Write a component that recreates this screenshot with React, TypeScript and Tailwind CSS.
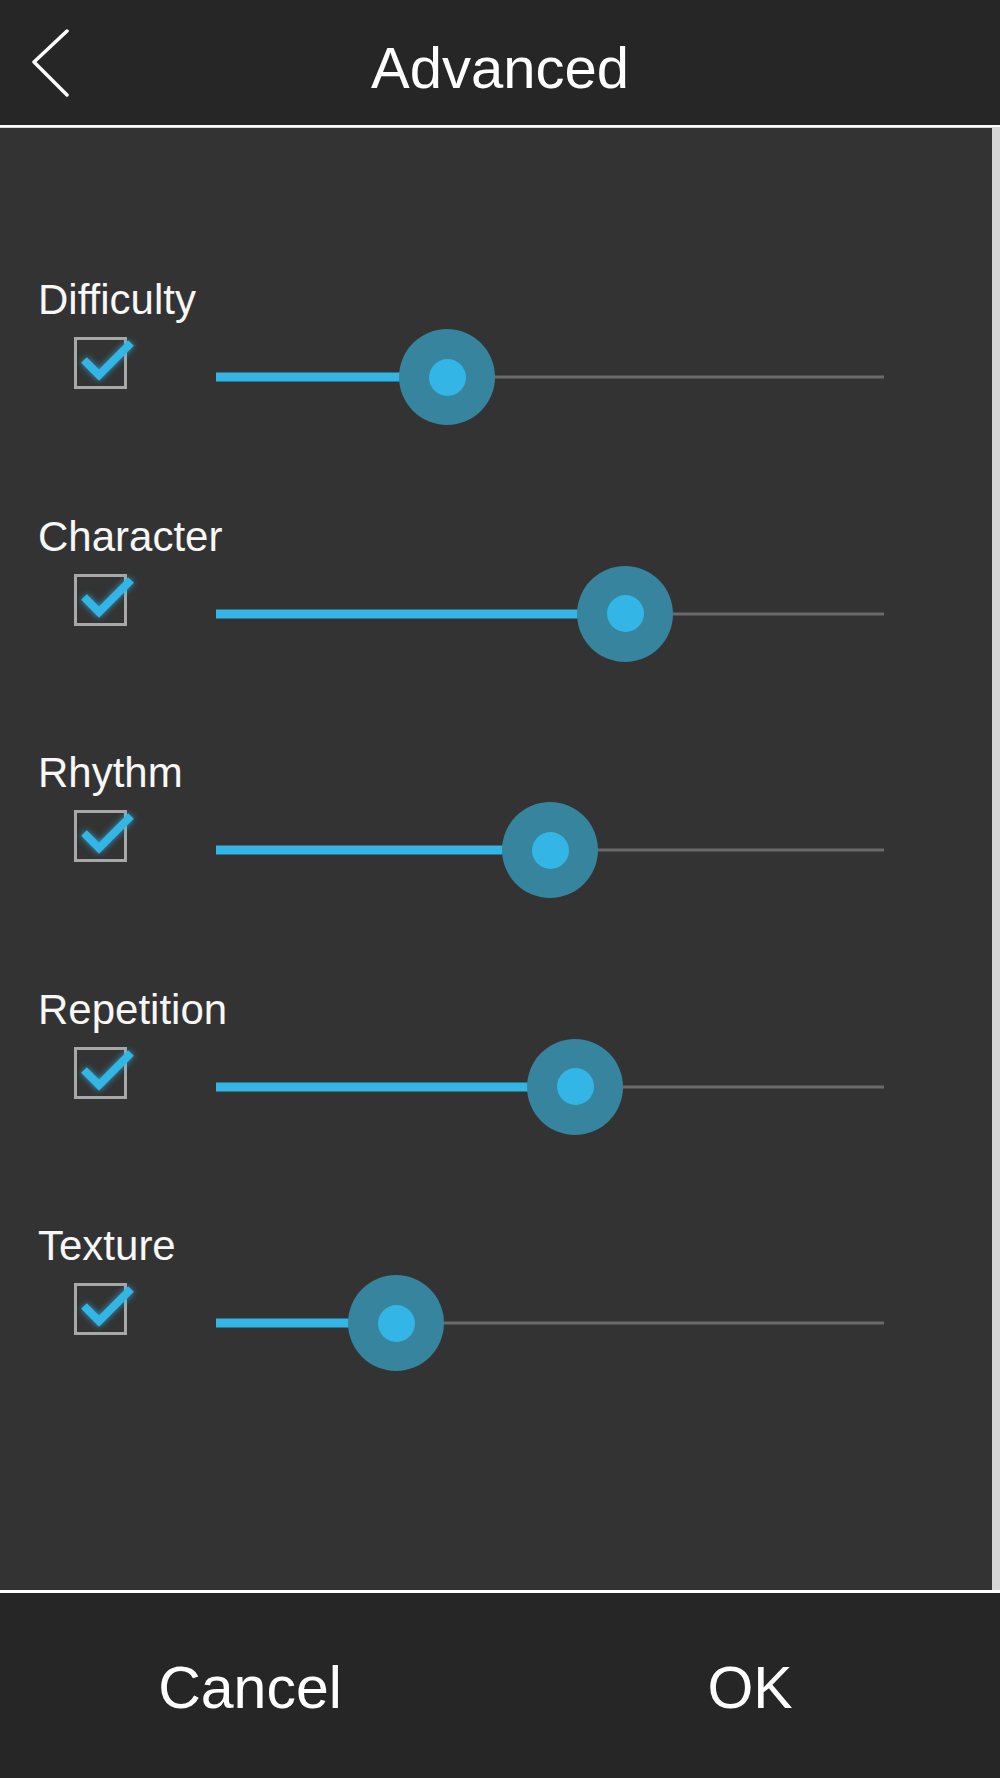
import React from 'react';

const settings = [
  { label: 'Difficulty', value: 231 },
  { label: 'Character', value: 409 },
  { label: 'Rhythm', value: 334 },
  { label: 'Repetition', value: 359 },
  { label: 'Texture', value: 180 },
];

function CheckBox() {
  return (
    <div className="relative mt-[13px] h-[52px] w-[53px] shrink-0 border-[3px] border-[#a8a8a8]">
      <svg
        className="absolute left-[-3px] top-[-3px] overflow-visible"
        width="53"
        height="52"
        viewBox="0 0 53 52"
        style={{ filter: 'drop-shadow(0 0 3px rgba(51,181,229,0.8))' }}
      >
        <polyline
          points="10,23 25,38 57,6"
          fill="none"
          stroke="#33b5e5"
          strokeWidth="8"
          strokeLinecap="butt"
          strokeLinejoin="miter"
        />
      </svg>
    </div>
  );
}

function Slider({ value }: { value: number }) {
  return (
    <div className="relative h-full w-[668px]">
      <div className="absolute left-0 right-0 top-1/2 h-[3px] -translate-y-1/2 bg-[#6a6a6a]" />
      <div
        className="absolute left-0 top-1/2 h-[9px] -translate-y-1/2 bg-[#33b5e5]"
        style={{ width: value }}
      />
      <div
        className="absolute top-1/2 flex h-[96px] w-[96px] -translate-x-1/2 -translate-y-1/2 items-center justify-center rounded-full bg-[#37849f]"
        style={{ left: value }}
      >
        <div className="h-[37px] w-[37px] rounded-full bg-[#33b5e5]" />
      </div>
    </div>
  );
}

export default function App() {
  return (
    <div
      className="flex h-[1778px] w-[1000px] flex-col bg-[#262626] text-white"
      style={{ fontFamily: '"Liberation Sans", Arial, sans-serif' }}
    >
      {/* Header */}
      <header className="relative flex h-[127px] shrink-0 items-center justify-center border-b-2 border-white bg-[#262626] pt-[10px]">
        <svg className="absolute left-[31px] top-[29px]" width="40" height="68" viewBox="0 0 40 68">
          <polyline
            points="36,2 3,33 36,66"
            fill="none"
            stroke="#ffffff"
            strokeWidth="3.5"
            strokeLinecap="round"
            strokeLinejoin="round"
          />
        </svg>
        <h1 className="text-[58px] leading-none font-normal">Advanced</h1>
      </header>

      {/* Settings */}
      <main className="flex h-[1463px] shrink-0 flex-col gap-[82.5px] border-t border-r-8 border-[#d6d6d6] bg-[#333333] pt-[148px]">
        {settings.map((s) => (
          <div key={s.label} className="flex flex-col">
            <div className="h-12 pl-[38px] text-[42px] leading-[48px] text-[#f7f7f7]">{s.label}</div>
            <div className="flex h-[106px] items-start pl-[74px]">
              <CheckBox />
              <div className="ml-[89px] h-full">
                <Slider value={s.value} />
              </div>
            </div>
          </div>
        ))}
      </main>

      {/* Footer */}
      <footer className="flex flex-1 border-t-[3px] border-white bg-[#262626] pt-[6px]">
        <button className="flex flex-1 items-center justify-center text-[59px] leading-none text-white">
          Cancel
        </button>
        <button className="flex flex-1 items-center justify-center text-[59px] leading-none text-white">
          OK
        </button>
      </footer>
    </div>
  );
}
